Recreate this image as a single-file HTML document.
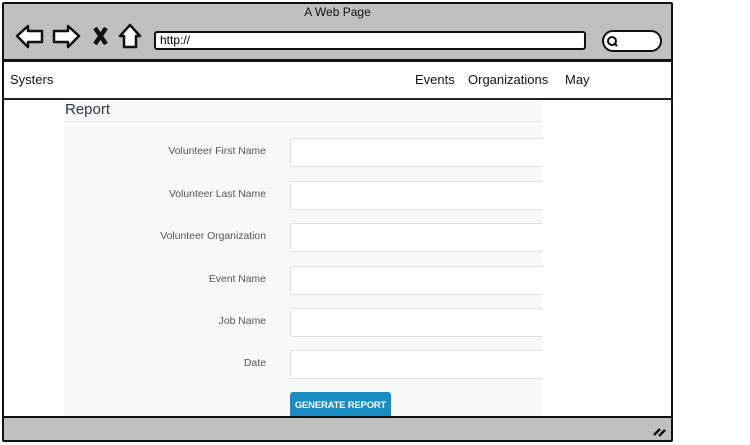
<!DOCTYPE html>
<html><head><style>
*{margin:0;padding:0;box-sizing:border-box}
body{width:750px;height:445px;background:#fff;position:relative;overflow:hidden;font-family:"Liberation Sans",sans-serif}
.a{position:absolute}
.lbl{position:absolute;right:484px;font-size:10.4px;color:#555;text-align:right;white-space:nowrap}
.inp{position:absolute;left:290px;width:252px;height:29px;background:#fff;border:1px solid #e0e0e0;border-right:none;border-radius:3px 0 0 3px}
.nav{font-size:13px;color:#111;top:72px}
</style></head><body>
<div class="a" style="left:2px;top:2px;width:671px;height:440px;border:2.5px solid #111;border-radius:2px"></div>
<div class="a" style="left:4px;top:4px;width:667px;height:56px;background:#c0c0c0"></div>
<div class="a" style="left:2px;top:59px;width:671px;height:3px;background:#111"></div>
<div class="a" style="left:2px;top:98px;width:671px;height:2px;background:#222"></div>
<div class="a" style="left:4px;top:416px;width:667px;height:24px;background:#c0c0c0;border-top:2.5px solid #111"></div>
<div class="a" style="left:0;top:5px;width:675px;text-align:center;font-size:12px;color:#111">A Web Page</div>
<svg class="a" style="left:14px;top:22px" width="135" height="30" viewBox="0 0 135 30" fill="#fff" stroke="#111" stroke-width="2.5" stroke-linejoin="round">
<path d="M3 14 L14 4 L14 9 L28 9 L28 20 L14 20 L14 25 Z"/>
<path d="M65 14 L54 4 L54 9 L40 9 L40 20 L54 20 L54 25 Z"/>
<path d="M81 6 L92 22 M92 6 L81 22" stroke-width="4.5" fill="none"/>
<path d="M116 3 L106 14 L110 14 L110 25 L122 25 L122 14 L126 14 Z"/>
</svg>
<div class="a" style="left:154px;top:31px;width:432px;height:19px;background:#fff;border:2.5px solid #111;border-radius:3px;font-size:12px;padding-left:4px;line-height:14px">http://</div>
<div class="a" style="left:602px;top:30px;width:60px;height:22px;background:#fff;border:2.5px solid #111;border-radius:12px"></div>
<svg class="a" style="left:606px;top:35px" width="14" height="12"><circle cx="6" cy="6" r="4" fill="none" stroke="#111" stroke-width="2"/><path d="M8 8 L11 11" stroke="#111" stroke-width="2"/></svg>
<div class="a nav" style="left:10px">Systers</div>
<div class="a nav" style="left:415px">Events</div>
<div class="a nav" style="left:468px">Organizations</div>
<div class="a nav" style="left:565px">May</div>
<div class="a" style="left:64px;top:100px;width:478px;height:316px;background:#f8f8f8"></div>
<div class="a" style="left:64px;top:121px;width:478px;height:1px;background:#e5e5e5"></div>
<div class="a" style="left:65px;top:101px;font-size:15px;color:#334">Report</div>
<div class="lbl" style="top:146px">Volunteer First Name</div><div class="inp" style="top:138px"></div>
<div class="lbl" style="top:189px">Volunteer Last Name</div><div class="inp" style="top:181px"></div>
<div class="lbl" style="top:231px">Volunteer Organization</div><div class="inp" style="top:223px"></div>
<div class="lbl" style="top:274px">Event Name</div><div class="inp" style="top:266px"></div>
<div class="lbl" style="top:316px">Job Name</div><div class="inp" style="top:308px"></div>
<div class="lbl" style="top:358px">Date</div><div class="inp" style="top:350px"></div>
<div class="a" style="left:290px;top:392px;width:101px;height:24px;background:#1a8cbf;border-radius:3px 3px 0 0;color:#fff;font-size:9.5px;font-weight:bold;text-align:center;line-height:27px;letter-spacing:-0.2px">GENERATE REPORT</div>
<svg class="a" style="left:652px;top:424px" width="16" height="14"><path d="M2 11 L8 5 M7 12 L13 6" stroke="#111" stroke-width="2.5"/></svg>
</body></html>
